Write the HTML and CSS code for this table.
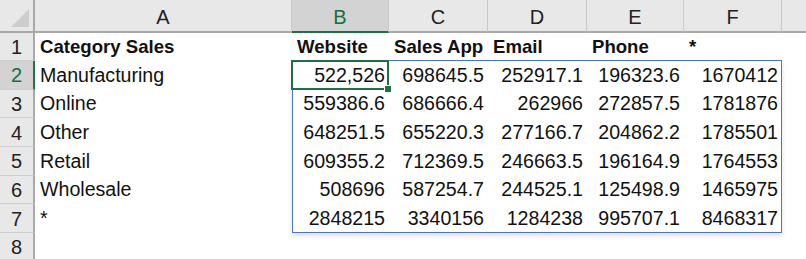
FILE: index.html
```html
<!DOCTYPE html>
<html lang="en">
<head>
  <meta charset="UTF-8" />
  <title>Category Sales</title>
  <link rel="stylesheet" href="styles.css">
</head>
<body>
  <div class="wrap">
  <div class="sheet">
    <!-- column headers -->
    <div class="corner"><span class="tri"></span></div>
    <div class="colhead">A</div>
    <div class="colhead sel">B</div>
    <div class="colhead">C</div>
    <div class="colhead">D</div>
    <div class="colhead">E</div>
    <div class="colhead">F</div>
    <div class="colhead last"></div>

    <!-- row 1 -->
    <div class="rowhead">1</div>
    <div class="cell bold">Category Sales</div>
    <div class="cell bold">Website</div>
    <div class="cell bold">Sales App</div>
    <div class="cell bold">Email</div>
    <div class="cell bold">Phone</div>
    <div class="cell bold">*</div>
    <div class="cell"></div>

    <!-- row 2 -->
    <div class="rowhead sel">2</div>
    <div class="cell">Manufacturing</div>
    <div class="cell num">522,526</div>
    <div class="cell num">698645.5</div>
    <div class="cell num">252917.1</div>
    <div class="cell num">196323.6</div>
    <div class="cell num">1670412</div>
    <div class="cell"></div>

    <!-- row 3 -->
    <div class="rowhead">3</div>
    <div class="cell">Online</div>
    <div class="cell num">559386.6</div>
    <div class="cell num">686666.4</div>
    <div class="cell num">262966</div>
    <div class="cell num">272857.5</div>
    <div class="cell num">1781876</div>
    <div class="cell"></div>

    <!-- row 4 -->
    <div class="rowhead">4</div>
    <div class="cell">Other</div>
    <div class="cell num">648251.5</div>
    <div class="cell num">655220.3</div>
    <div class="cell num">277166.7</div>
    <div class="cell num">204862.2</div>
    <div class="cell num">1785501</div>
    <div class="cell"></div>

    <!-- row 5 -->
    <div class="rowhead">5</div>
    <div class="cell">Retail</div>
    <div class="cell num">609355.2</div>
    <div class="cell num">712369.5</div>
    <div class="cell num">246663.5</div>
    <div class="cell num">196164.9</div>
    <div class="cell num">1764553</div>
    <div class="cell"></div>

    <!-- row 6 -->
    <div class="rowhead">6</div>
    <div class="cell">Wholesale</div>
    <div class="cell num">508696</div>
    <div class="cell num">587254.7</div>
    <div class="cell num">244525.1</div>
    <div class="cell num">125498.9</div>
    <div class="cell num">1465975</div>
    <div class="cell"></div>

    <!-- row 7 -->
    <div class="rowhead">7</div>
    <div class="cell">*</div>
    <div class="cell num">2848215</div>
    <div class="cell num">3340156</div>
    <div class="cell num">1284238</div>
    <div class="cell num">995707.1</div>
    <div class="cell num">8468317</div>
    <div class="cell"></div>

    <!-- row 8 -->
    <div class="rowhead">8</div>
    <div class="cell"></div>
    <div class="cell"></div>
    <div class="cell"></div>
    <div class="cell"></div>
    <div class="cell"></div>
    <div class="cell"></div>
    <div class="cell"></div>
  </div>

  <!-- selection boxes, same grid laid over the sheet -->
  <div class="sheet overlay">
    <div class="range"></div>
    <div class="active"><span class="handle"></span></div>
  </div>
  </div>
</body>
</html>
```

FILE: styles.css
```css
body {
  margin: 0;
  background: #ffffff;
  font-family: "Liberation Sans", Arial, sans-serif;
  color: #111;
  overflow: hidden;
}

.wrap {
  position: relative;
}

.sheet {
  display: grid;
  grid-template-columns: 35px 257px 97px 99px 99px 97px 98px 40px;
  grid-template-rows: 33px 28px repeat(7, 28.67px);
  font-size: 19.6px;
}

.overlay {
  position: absolute;
  top: 0;
  left: 0;
  right: 0;
  bottom: 0;
  pointer-events: none;
}

.corner,
.colhead,
.rowhead {
  background: #e8e8e8;
  color: #222;
  display: flex;
  align-items: center;
  justify-content: center;
}

.corner {
  position: relative;
  border-right: 2px solid #a9a9a9;
  border-bottom: 2px solid #a9a9a9;
}

.corner .tri {
  position: absolute;
  right: 4px;
  bottom: 4px;
  width: 0;
  height: 0;
  border-left: 18px solid transparent;
  border-bottom: 18px solid #cdcdcd;
}

.colhead {
  border-right: 1px solid #c9c9c9;
  border-bottom: 2px solid #a9a9a9;
  padding-top: 3px;
  font-size: 20px;
}

.colhead.sel {
  background: #d3d3d3;
  color: #12703c;
  border-bottom: 2px solid #1e7145;
}

.colhead.last {
  border-right: none;
}

.rowhead {
  border-right: 2px solid #a9a9a9;
  border-bottom: 1px solid #cfcfcf;
  padding-top: 2px;
  font-size: 20px;
}

.rowhead.sel {
  background: #d3d3d3;
  color: #12703c;
  border-right: 2px solid #1e7145;
}

.cell {
  display: flex;
  align-items: flex-end;
  padding: 0 4px 3px 5px;
  white-space: nowrap;
}

.cell.bold {
  font-weight: bold;
  font-size: 18.6px;
}

.cell.num {
  justify-content: flex-end;
}

.range {
  grid-column: 3 / 8;
  grid-row: 3 / 9;
  border: 1px solid #4a76c6;
  box-shadow: 0 3px 5px rgba(0, 0, 0, 0.12);
  margin: -1px 0 0 0;
}

.active {
  grid-column: 3;
  grid-row: 3;
  border: 2px solid #1e7145;
  margin: -1px 0 0 -1px;
  position: relative;
}

.active .handle {
  position: absolute;
  right: -5px;
  bottom: -5px;
  width: 6px;
  height: 6px;
  background: #1e7145;
  border: 1px solid #fff;
}
```
